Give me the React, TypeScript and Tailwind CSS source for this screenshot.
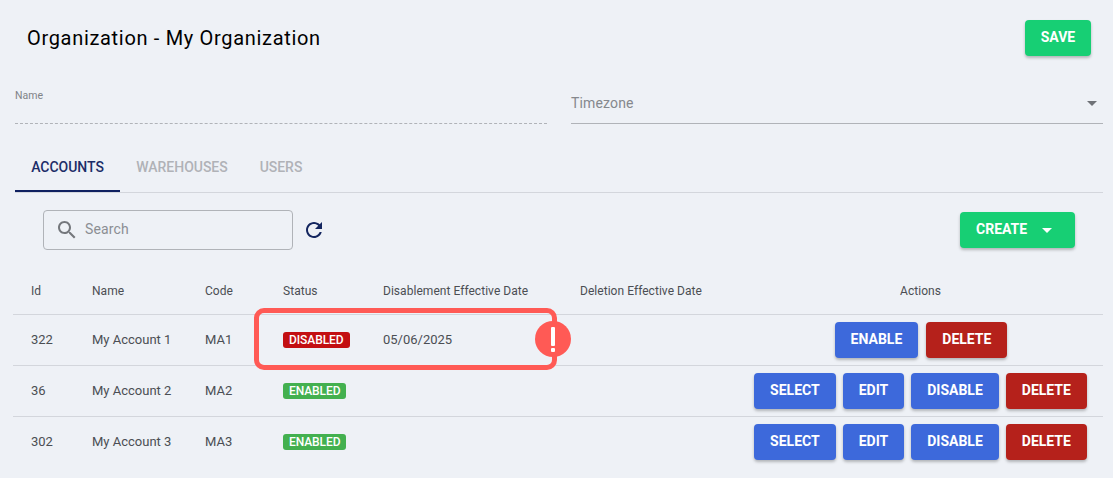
const font = { fontFamily: "Roboto, sans-serif" };

const SearchIcon = () => (
  <svg viewBox="0 0 24 24" className="w-6 h-6 fill-[#74777c]">
    <path d="M15.5 14h-.79l-.28-.27C15.41 12.59 16 11.11 16 9.5 16 5.91 13.09 3 9.5 3S3 5.91 3 9.5 5.91 16 9.5 16c1.61 0 3.09-.59 4.23-1.57l.27.28v.79l5 4.99L20.49 19l-4.99-5zm-6 0C7.01 14 5 11.99 5 9.5S7.01 5 9.5 5 14 7.01 14 9.5 11.99 14 9.5 14z" />
  </svg>
);

const RefreshIcon = () => (
  <svg viewBox="0 0 24 24" className="w-6 h-6 fill-[#14265f]">
    <path d="M17.65 6.35C16.2 4.9 14.21 4 12 4c-4.42 0-7.99 3.58-7.99 8s3.57 8 7.99 8c3.73 0 6.84-2.55 7.73-6h-2.08c-.82 2.33-3.04 4-5.65 4-3.31 0-6-2.69-6-6s2.69-6 6-6c1.66 0 3.14.69 4.22 1.78L13 11h7V4l-2.35 2.35z" />
  </svg>
);

const Caret = ({ className }: { className: string }) => (
  <svg viewBox="0 0 24 24" className={className}>
    <path d="M7 10l5 5 5-5z" />
  </svg>
);

const Btn = ({ label, color }: { label: string; color: "blue" | "red" }) => (
  <button
    className={
      "h-9 px-4 pb-[2px] rounded text-sm font-bold text-white shadow-[0_2px_3px_rgba(0,0,0,0.25)] " +
      (color === "blue" ? "bg-[#3d69db]" : "bg-[#b5211b]")
    }
  >
    {label}
  </button>
);

const Badge = ({ on }: { on: boolean }) => (
  <span
    className={
      "inline-block h-4 leading-4 px-[6px] rounded-[3px] text-xs font-medium tracking-[-0.08px] text-white " +
      (on ? "bg-[#43b04f]" : "bg-[#c30f12]")
    }
  >
    {on ? "ENABLED" : "DISABLED"}
  </span>
);

const rows = [
  { id: "322", name: "My Account 1", code: "MA1", on: false, date: "05/06/2025", actions: ["ENABLE", "DELETE"] },
  { id: "36", name: "My Account 2", code: "MA2", on: true, date: "", actions: ["SELECT", "EDIT", "DISABLE", "DELETE"] },
  { id: "302", name: "My Account 3", code: "MA3", on: true, date: "", actions: ["SELECT", "EDIT", "DISABLE", "DELETE"] },
];

export default function App() {
  return (
    <div style={font} className="w-[1113px] h-[478px] overflow-hidden bg-[#eef1f6]">
      {/* Заголовок */}
      <div className="flex items-center justify-between pt-5 pl-[27px] pr-[22px] h-[56px]">
        <h1 className="text-xl tracking-[0.68px] text-black">Organization - My Organization</h1>
        <button className="h-9 w-[66px] pb-[2px] rounded bg-[#17cf74] text-sm font-bold text-white shadow-[0_2px_3px_rgba(0,0,0,0.25)]">
          SAVE
        </button>
      </div>

      {/* Поля */}
      <div className="grid grid-cols-2 gap-6 ml-[15px] mr-[10px] mt-[32px] h-[36px]">
        <div className="border-b border-dashed border-[#b0b3b8] pt-[2px] text-[10.5px] leading-3 text-[#808387]">Name</div>
        <div className="flex items-start justify-between border-b border-[#b0b3b8] text-sm tracking-[0.15px] text-[#85888d]">
          <span className="mt-[7px] leading-4">Timezone</span>
          <Caret className="w-6 h-6 -mr-[1px] mt-[3px] fill-[#6f7277]" />
        </div>
      </div>

      {/* Вкладки */}
      <div className="flex ml-[15px] mr-[10px] mt-[20px] h-[49px] border-b border-[#d3d6dc] text-sm font-medium tracking-[-0.02px]">
        <div className="h-[48px] w-[105px] pb-[1px] flex items-center justify-center border-b-2 border-[#0f2060] text-[#1c2d68]">ACCOUNTS</div>
        <div className="h-[46px] w-[124px] flex items-center justify-center text-[#b0b2b7]">WAREHOUSES</div>
        <div className="h-[46px] w-[74px] flex items-center justify-center text-[#b0b2b7]">USERS</div>
      </div>

      {/* Пошук */}
      <div className="flex items-center justify-between ml-[43px] mr-[38px] mt-[17px]">
        <div className="flex items-center gap-[9px]">
          <div className="flex items-center gap-[6px] w-[250px] h-10 pl-[11px] border border-[#b0b3b8] rounded text-sm tracking-[0.15px] text-[#8b8e93]">
            <SearchIcon />
            <span className="-mt-[2px]">Search</span>
          </div>
          <RefreshIcon />
        </div>
        <button className="flex items-center h-9 w-[115px] pl-4 rounded bg-[#17cf74] text-sm font-bold text-white shadow-[0_2px_3px_rgba(0,0,0,0.25)]">
          <span className="-mt-[2px]">CREATE</span>
          <Caret className="w-6 h-6 ml-[8px] fill-white" />
        </button>
      </div>

      {/* Таблиця */}
      <div className="relative ml-[13px] mr-[10px] mt-[20px]">
        <table className="w-[1090px] table-fixed border-collapse text-[13px] text-[#4b4e53]">
          <colgroup>
            <col className="w-[61px]" />
            <col className="w-[113px]" />
            <col className="w-[78px]" />
            <col className="w-[100px]" />
            <col className="w-[197px]" />
            <col className="w-[176px]" />
            <col className="w-[365px]" />
          </colgroup>
          <thead>
            <tr className="h-[44px] border-b border-[#d3d6dc] text-xs tracking-[0.04px]">
              <th className="pl-[18px] pb-[2px] text-left font-normal">Id</th>
              <th className="pl-[18px] pb-[2px] text-left font-normal">Name</th>
              <th className="pl-[18px] pb-[2px] text-left font-normal">Code</th>
              <th className="pl-[18px] pb-[2px] text-left font-normal">Status</th>
              <th className="pl-[18px] pb-[2px] text-left font-normal whitespace-nowrap">Disablement Effective Date</th>
              <th className="pl-[18px] pb-[2px] text-left font-normal whitespace-nowrap">Deletion Effective Date</th>
              <th className="pb-[2px] text-center font-normal">Actions</th>
            </tr>
          </thead>
          <tbody>
            {rows.map((r, i) => (
              <tr key={r.id} className={"h-[51px] " + (i < 2 ? "border-b border-[#d3d6dc]" : "")}>
                <td className="pl-[18px]">{r.id}</td>
                <td className="pl-[18px]">{r.name}</td>
                <td className="pl-[18px]">{r.code}</td>
                <td className="pl-[18px]">
                  <Badge on={r.on} />
                </td>
                <td className="pl-[18px]">{r.date}</td>
                <td></td>
                <td>
                  <div className={"flex justify-center " + (r.actions.length === 2 ? "gap-2 pl-[1px]" : "gap-[7px]")}>
                    {r.actions.map((a) => (
                      <Btn key={a} label={a} color={a === "DELETE" ? "red" : "blue"} />
                    ))}
                  </div>
                </td>
              </tr>
            ))}
          </tbody>
        </table>

        {/* Виділення рядка */}
        <div className="absolute left-[241px] top-[38px] w-[303px] h-[62px] rounded-[10px] border-[5px] border-[#ff5a55] pointer-events-none"></div>
        <div className="absolute left-[522px] top-[51px] w-9 h-9 rounded-full bg-[#ff5a55] flex flex-col items-center justify-center gap-[2px]">
          <div className="w-[4px] h-[19px] bg-white rounded-[1px]"></div>
          <div className="w-[4px] h-[4px] bg-white rounded-[1px]"></div>
        </div>
      </div>
    </div>
  );
}
